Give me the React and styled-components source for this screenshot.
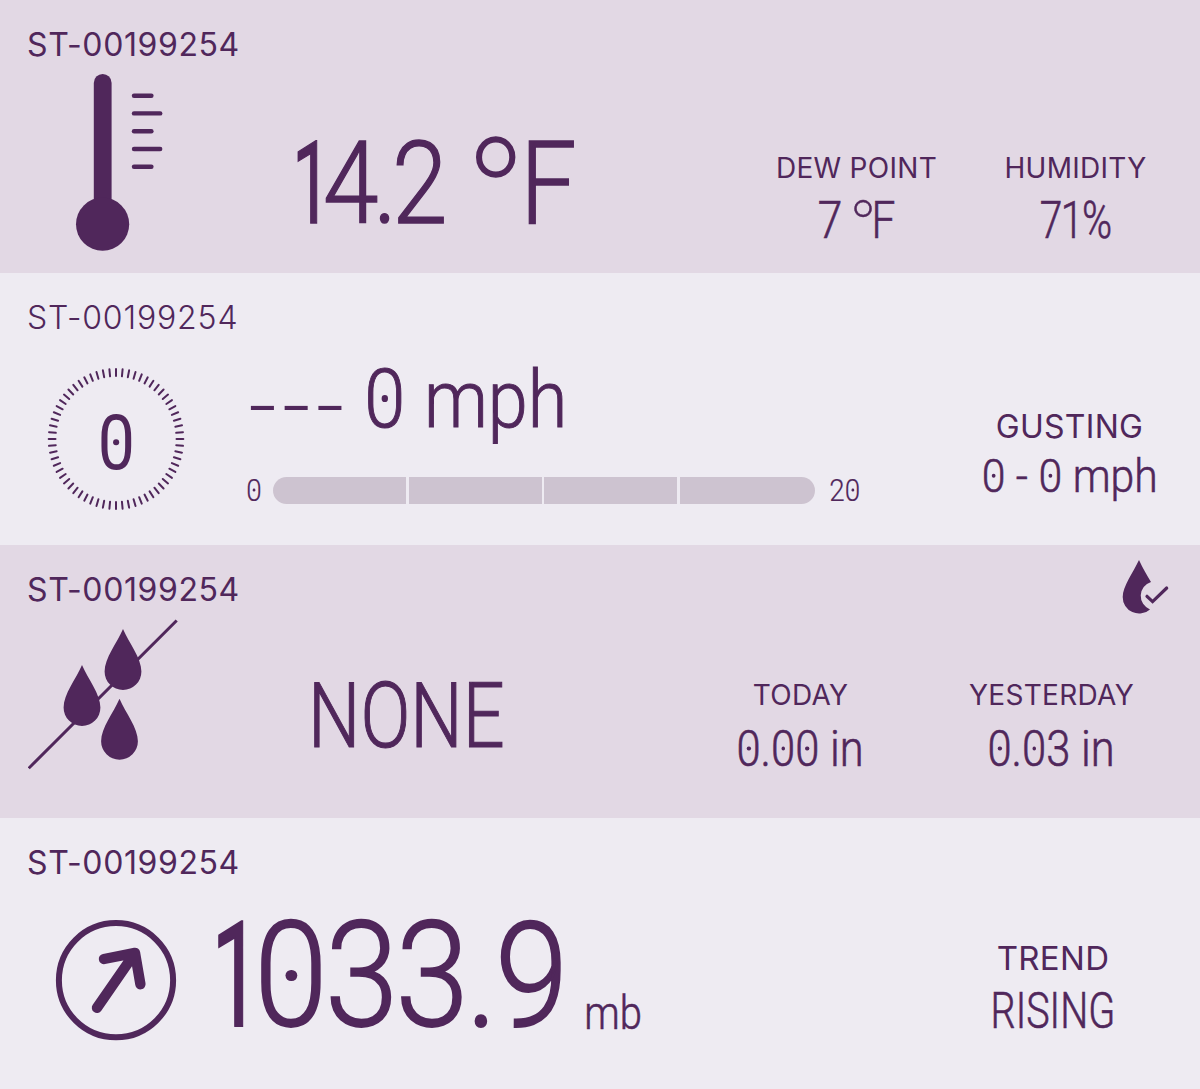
import React from "react";
import styled, { createGlobalStyle } from "styled-components";

const INK = "#50275b";

const GlobalStyle = createGlobalStyle`
  body {
    margin: 0;
    background: #eeebf2;
    color: ${INK};
  }
`;

const Board = styled.main`
  display: flex;
  flex-direction: column;
  width: 1200px;
`;

const Panel = styled.section`
  display: flex;
  flex-direction: column;
  height: ${(p) => p.$height}px;
  background: ${(p) => (p.$tinted ? "#e2d8e4" : "#eeebf2")};
`;

const PanelHead = styled.header`
  display: flex;
  justify-content: space-between;
  height: 64px;
  padding: 0 28px;
`;

const StationName = styled.h2`
  margin: 25px 0 0 -1px;
  font: ${(p) => (p.$light ? 300 : 400)} 32px/40px Inter, sans-serif;
  letter-spacing: ${(p) => (p.$light ? 0.85 : 0.6)}px;
`;

const PanelBody = styled.div`
  display: flex;
  align-items: flex-start;
  height: 209px;
  padding-left: 28px;
`;

const Icon = styled.svg`
  flex: none;
  display: block;
  fill: ${INK};
  stroke: none;
`;

const Main = styled.div`
  display: flex;
  align-items: baseline;
  margin: ${(p) => p.$top}px 0 0 ${(p) => p.$left}px;
`;

// Holds one condensed run of figures, centred on a box as wide as its ink.
const Slot = styled.span`
  display: flex;
  justify-content: center;
  flex: none;
  width: ${(p) => p.$width}px;
  margin-left: ${(p) => p.$gap || 0}px;
  white-space: pre;
`;

const Figures = styled.span`
  flex: none;
  font: ${(p) => p.$weight || 300} ${(p) => p.$size}px/${(p) => (p.$flat ? 0 : 1)} Roboto, sans-serif;
  letter-spacing: ${(p) => p.$track || 0}px;
  -webkit-text-stroke: ${(p) => p.$stroke ?? 0.012}em ${INK};
  transform: translateY(${(p) => p.$drop || 0}px) scaleX(${(p) => p.$squeeze || 0.87});
`;

const Zero = styled.span`
  position: relative;

  &::after {
    content: "";
    position: absolute;
    left: 0.281em;
    top: 50%;
    width: 0.09em;
    height: 0.08em;
    border-radius: 50%;
    background: ${INK};
    transform: translate(-50%, -60%);
  }
`;

const Stats = styled.div`
  display: flex;
  margin: ${(p) => p.$top}px ${(p) => p.$right}px 0 auto;
`;

const Stat = styled.div`
  display: flex;
  flex-direction: column;
  align-items: center;
  width: ${(p) => p.$width}px;
`;

const StatLabel = styled.span`
  font: 400 ${(p) => p.$size || 28}px/1 Inter, sans-serif;
  letter-spacing: 0.3px;
`;

const StatValue = styled.div`
  display: flex;
  align-items: baseline;
  justify-content: center;
  margin-top: ${(p) => p.$top}px;
`;

const WindColumn = styled.div`
  display: flex;
  flex-direction: column;
  margin-left: 39px;
`;

const Dial = styled.div`
  display: grid;
  place-items: center;
  width: 180px;
  height: 209px;

  > * {
    grid-area: 1 / 1;
  }
`;

const DialValue = styled.div`
  display: flex;
  justify-content: center;
  width: 176px;
  margin-right: 4px;
  padding-top: 3px;
`;

const Scale = styled.div`
  display: flex;
  align-items: center;
  margin-top: 34px;
`;

const Bar = styled.div`
  display: grid;
  grid-template-columns: 133px 133px 133px 1fr;
  gap: 2.5px;
  width: 542px;
  height: 27px;
  margin: 0 14px 0 12px;
  border-radius: 14px;
  overflow: hidden;
`;

const Segment = styled.span`
  background: #cdc3d0;
`;

const withZeros = (text) =>
  text.split(/(0)/).map((part, i) => (part === "0" ? <Zero key={i}>0</Zero> : part));

const Run = ({ text, width, gap, ...look }) => (
  <Slot $width={width} $gap={gap}>
    <Figures
      $size={look.size}
      $squeeze={look.squeeze}
      $track={look.track}
      $drop={look.drop}
      $weight={look.weight}
      $stroke={look.stroke}
      $flat={look.flat}
    >
      {withZeros(text)}
    </Figures>
  </Slot>
);

const DROP = "M0 0C6 14 18.4 29 18.4 42.6A18.4 18.4 0 0 1-18.4 42.6C-18.4 29-6 14 0 0Z";

const Thermometer = () => (
  <Icon width="180" height="209" viewBox="28 64 180 209">
    <rect x="93.8" y="74" width="17.8" height="140" rx="8.9" />
    <circle cx="102.6" cy="224.2" r="26.6" />
    <g stroke={INK} strokeWidth="4.4" strokeLinecap="round">
      {[95.7, 113.4, 131.2, 149, 166.7].map((y, i) => (
        <path key={y} d={`M134 ${y}H${i % 2 ? 160.2 : 151.4}`} />
      ))}
    </g>
  </Icon>
);

const TICKS = 64;

const Compass = () => (
  <Icon width="180" height="209" viewBox="28 337 180 209">
    <g stroke={INK} strokeWidth="2" strokeLinecap="round">
      {Array.from({ length: TICKS }, (_, i) => {
        const a = (i / TICKS) * Math.PI * 2;
        const x = Math.sin(a);
        const y = Math.cos(a);
        return (
          <line
            key={i}
            x1={116 + x * 60.5}
            y1={439 + y * 63}
            x2={116 + x * 67.3}
            y2={439 + y * 70}
          />
        );
      })}
    </g>
  </Icon>
);

const NoRain = () => (
  <Icon width="180" height="209" viewBox="28 609 180 209">
    <path d="M28.7 768.3L176.7 620.5" stroke={INK} strokeWidth="3" />
    <path d={DROP} transform="translate(123 629)" />
    <path d={DROP} transform="translate(82 665)" />
    <path d={DROP} transform="translate(119.5 698.7)" />
  </Icon>
);

const RainCheck = () => (
  <Icon width="50" height="64" viewBox="1122 545 50 64" overflow="visible">
    <path d="M1139 560C1143 569 1147 575 1151 582A14.5 14.5 0 0 0 1150 609.4A16.4 16.4 0 0 1 1122.7 597C1122.7 586 1133 573 1139 560Z" />
    <path
      d="M1147 596.3L1152.6 601.6L1166.7 588"
      fill="none"
      stroke={INK}
      strokeWidth="3.2"
      strokeLinecap="round"
    />
  </Icon>
);

const RisingArrow = () => (
  <Icon width="180" height="209" viewBox="28 882 180 209">
    <g fill="none" stroke={INK} strokeLinecap="round" strokeLinejoin="round">
      <circle cx="116" cy="980.2" r="57.1" strokeWidth="6" />
      <path d="M97 1007.8L135 952.9M104 959L135 952.9L140.4 984.2" strokeWidth="10.4" />
    </g>
  </Icon>
);

const Temperature = () => (
  <Panel $height={273} $tinted>
    <PanelHead>
      <StationName>ST-00199254</StationName>
    </PanelHead>
    <PanelBody>
      <Thermometer />
      <Main $top={62} $left={84}>
        <Run text="1" width={27} size={115} squeeze={0.6} track={-19} weight={400} />
        <Run text="4.2" width={120} gap={4} size={115} squeeze={0.87} track={-6} />
        <Run text="°" width={41} gap={28} size={172} squeeze={0.96} track={-8} drop={38} weight={100} stroke={0.01} flat />
        <Run text="F" width={47} gap={13} size={115} squeeze={0.87} />
      </Main>
      <Stats $top={90} $right={15}>
        <Stat $width={219}>
          <StatLabel>DEW POINT</StatLabel>
          <StatValue $top={13}>
            <Run text="7" width={21} size={51} />
            <Run text="°" width={20} gap={8} size={75} squeeze={1} track={-8} drop={15} weight={100} stroke={0.006} flat />
            <Run text="F" width={20} gap={4} size={51} squeeze={0.83} />
          </StatValue>
        </Stat>
        <Stat $width={219}>
          <StatLabel>HUMIDITY</StatLabel>
          <StatValue $top={13}>
            <Run text="71%" width={70} size={51} squeeze={0.8} track={-2} />
          </StatValue>
        </Stat>
      </Stats>
    </PanelBody>
  </Panel>
);

const Wind = () => (
  <Panel $height={272}>
    <PanelHead>
      <StationName $light>ST-00199254</StationName>
    </PanelHead>
    <PanelBody>
      <Dial>
        <Compass />
        <DialValue>
          <Run text="0" width={32} size={76} weight={400} stroke={0} />
        </DialValue>
      </Dial>
      <WindColumn>
        <Main $top={21} $left={6}>
          <Run text="---" width={92} size={82} squeeze={1.2} track={4.6} drop={7} stroke={0} />
          <Run text="0" width={36} gap={22} size={82} squeeze={0.9} />
          <Run text="mph" width={136} gap={25} size={80} squeeze={0.9} />
        </Main>
        <Scale>
          <Run text="0" width={14} size={32} stroke={0.006} />
          <Bar>
            <Segment />
            <Segment />
            <Segment />
            <Segment />
          </Bar>
          <Run text="20" width={31} size={32} stroke={0.006} />
        </Scale>
      </WindColumn>
      <Stats $top={74} $right={42}>
        <Stat $width={177}>
          <StatLabel $size={32}>GUSTING</StatLabel>
          <StatValue $top={10}>
            <Run text="0 - 0 mph" width={174} size={46} squeeze={0.93} />
          </StatValue>
        </Stat>
      </Stats>
    </PanelBody>
  </Panel>
);

const Rain = () => (
  <Panel $height={273} $tinted>
    <PanelHead>
      <StationName>ST-00199254</StationName>
      <RainCheck />
    </PanelHead>
    <PanelBody>
      <NoRain />
      <Main $top={62} $left={102}>
        <Run text="NONE" width={193} size={91} squeeze={0.81} />
      </Main>
      <Stats $top={72} $right={23}>
        <Stat $width={251}>
          <StatLabel>TODAY</StatLabel>
          <StatValue $top={15}>
            <Run text="0.00 in" width={126} size={50} squeeze={0.87} />
          </StatValue>
        </Stat>
        <Stat $width={251}>
          <StatLabel>YESTERDAY</StatLabel>
          <StatValue $top={15}>
            <Run text="0.03 in" width={124} size={50} squeeze={0.87} />
          </StatValue>
        </Stat>
      </Stats>
    </PanelBody>
  </Panel>
);

const Pressure = () => (
  <Panel $height={271}>
    <PanelHead>
      <StationName>ST-00199254</StationName>
    </PanelHead>
    <PanelBody>
      <RisingArrow />
      <Main $top={22} $left={4}>
        <Run text="1" width={35} size={146} squeeze={0.6} track={-24} weight={400} />
        <Run text="033.9" width={302} gap={12} size={146} squeeze={0.905} track={-3} />
        <Run text="mb" width={55} gap={25} size={46} squeeze={0.87} drop={3} />
      </Main>
      <Stats $top={60} $right={57}>
        <Stat $width={180}>
          <StatLabel $size={33}>TREND</StatLabel>
          <StatValue $top={11}>
            <Run text="RISING" width={122} size={50} squeeze={0.79} />
          </StatValue>
        </Stat>
      </Stats>
    </PanelBody>
  </Panel>
);

const App = () => (
  <Board>
    <GlobalStyle />
    <Temperature />
    <Wind />
    <Rain />
    <Pressure />
  </Board>
);

export default App;
